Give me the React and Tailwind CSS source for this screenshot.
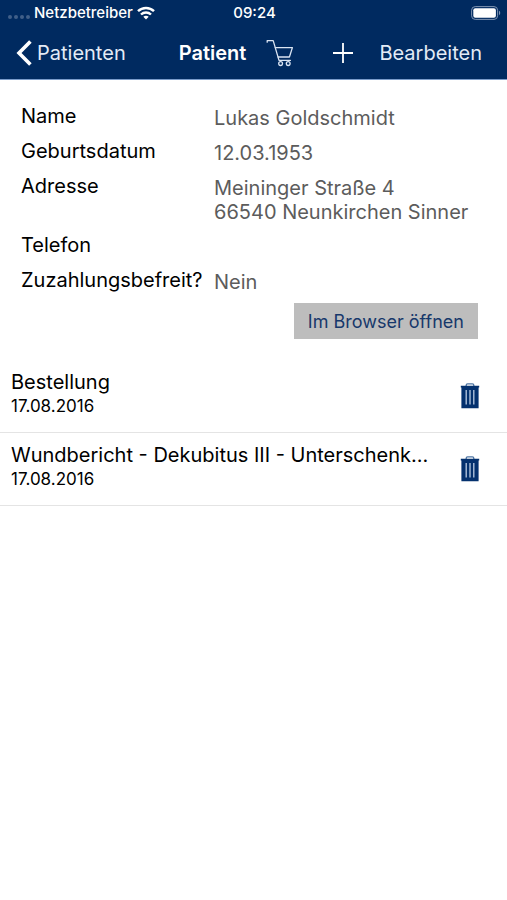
import React from 'react';

const details = [
  { label: 'Name', value: 'Lukas Goldschmidt' },
  { label: 'Geburtsdatum', value: '12.03.1953' },
  { label: 'Adresse', value: 'Meininger Straße 4\n66540 Neunkirchen Sinner' },
  { label: 'Telefon', value: '' },
  { label: 'Zuzahlungsbefreit?', value: 'Nein' },
];

const documents = [
  { id: 1, title: 'Bestellung', date: '17.08.2016' },
  { id: 2, title: 'Wundbericht - Dekubitus III - Unterschenk...', date: '17.08.2016' },
];

function WifiIcon() {
  return (
    <svg viewBox="0 0 18 14" className="w-[18px] h-[14px]" fill="none" stroke="currentColor" strokeWidth="2.4">
      <path d="M1 5.2C5.4 0.9 12.6 0.9 17 5.2" />
      <path d="M4 8.5C6.8 5.8 11.2 5.8 14 8.5" />
      <path d="M9 13.6L6.3 10.8C7.8 9.5 10.2 9.5 11.7 10.8Z" fill="currentColor" stroke="none" />
    </svg>
  );
}

function BatteryIcon() {
  return (
    <svg viewBox="0 0 30 14" className="w-[30px] h-[14px]">
      <rect x="0.6" y="0.6" width="26" height="12.8" rx="3.6" fill="none" stroke="#7f94b2" strokeWidth="1" />
      <rect x="2.3" y="2.3" width="22.6" height="9.4" rx="2" fill="#ffffff" />
      <path d="M28 4.8C29.6 5.4 29.6 8.6 28 9.2Z" fill="#7f94b2" />
    </svg>
  );
}

function CartIcon() {
  return (
    <svg viewBox="0 0 28 28" className="w-7 h-7" fill="none" stroke="#dbe5f3" strokeWidth="1.3" strokeLinejoin="round" strokeLinecap="round">
      <path d="M1.2 3.2V1.6H7.2L13 21.4H24.4" />
      <path d="M9.3 8.6H26.4L23.4 18H12.1" />
      <circle cx="14.6" cy="24.6" r="1.9" />
      <circle cx="22.2" cy="24.6" r="1.9" />
    </svg>
  );
}

function TrashIcon() {
  return (
    <svg viewBox="0 0 20 26" className="w-5 h-[26px]">
      <path d="M6.2 3V2.2C6.2 1.3 6.8 0.8 7.6 0.8H12.4C13.2 0.8 13.8 1.3 13.8 2.2V3" fill="none" stroke="#4d74a3" strokeWidth="1.3" />
      <path d="M0.8 2.8H19.2V4.6H18.6V25.2H1.4V4.6H0.8Z" fill="#04316e" />
      <path d="M6.2 7V21.4M10 7V21.4M13.8 7V21.4" stroke="#b9cbe2" strokeWidth="1.3" />
    </svg>
  );
}

export default function App() {
  return (
    <div className="min-h-screen bg-white text-black font-['Inter',sans-serif]">
      <header className="bg-[#002a60] text-white border-b border-[#7a9ccb]">
        <div className="grid grid-cols-[1fr_auto_1fr] items-center h-[26px] pl-2 pr-[6px] text-[15px] font-medium">
          <div className="flex items-center gap-1">
            <span className="flex gap-[2px] pt-2" aria-hidden="true">
              <i className="w-1 h-1 rounded-full bg-[#405f88]" />
              <i className="w-1 h-1 rounded-full bg-[#405f88]" />
              <i className="w-1 h-1 rounded-full bg-[#405f88]" />
              <i className="w-1 h-1 rounded-full bg-[#405f88]" />
            </span>
            <span>Netzbetreiber</span>
            <WifiIcon />
          </div>
          <span>09:24</span>
          <div className="flex justify-end">
            <BatteryIcon />
          </div>
        </div>

        <nav className="flex items-center h-[53px] pl-4 pr-[25px] text-[20px]">
          <a href="#patienten" className="flex items-center gap-[5px] text-[#e3ebf6]">
            <svg viewBox="0 0 16 26" className="w-4 h-[26px]" fill="none" stroke="#ffffff" strokeWidth="3.6">
              <path d="M14.4 1.4L3 13L14.4 24.6" />
            </svg>
            Patienten
          </a>
          <div className="flex-1 flex items-center justify-end gap-5 mr-[39px]">
            <h1 className="font-semibold">Patient</h1>
            <button type="button" aria-label="Warenkorb">
              <CartIcon />
            </button>
          </div>
          <button type="button" aria-label="Hinzufügen" className="mr-[26px]">
            <svg viewBox="0 0 20 20" className="w-5 h-5" stroke="currentColor" strokeWidth="1.8">
              <path d="M10 0V20M0 10H20" />
            </svg>
          </button>
          <button type="button" className="text-[#e3ebf6]">Bearbeiten</button>
        </nav>
      </header>

      <main>
        <section className="pt-6 pl-[21px] pr-[29px]">
          <dl className="space-y-[9px] text-[20px] leading-6">
            {details.map(item => (
              <div key={item.label} className="grid grid-cols-[193px_1fr] min-h-[26px]">
                <dt className="whitespace-nowrap">{item.label}</dt>
                <dd className="pt-0.5 text-[#5c5c5c] whitespace-pre-line">{item.value}</dd>
              </div>
            ))}
          </dl>
          <div className="flex justify-end mt-[9px]">
            <button type="button" className="h-9 px-[14px] bg-[#bdbdbd] text-[#17386b] text-[18px]">
              Im Browser öffnen
            </button>
          </div>
        </section>

        <ul className="mt-[21px]">
          {documents.map(doc => (
            <li
              key={doc.id}
              className="flex items-center justify-between pl-[11px] pr-[27px] pt-[10px] pb-[14px] border-b border-[#e4e4e4]"
            >
              <div className="min-w-0">
                <p className="text-[20px] leading-6 truncate">{doc.title}</p>
                <p className="text-[17px] leading-6">{doc.date}</p>
              </div>
              <button type="button" aria-label="Löschen" className="shrink-0 pt-1">
                <TrashIcon />
              </button>
            </li>
          ))}
        </ul>
      </main>
    </div>
  );
}
